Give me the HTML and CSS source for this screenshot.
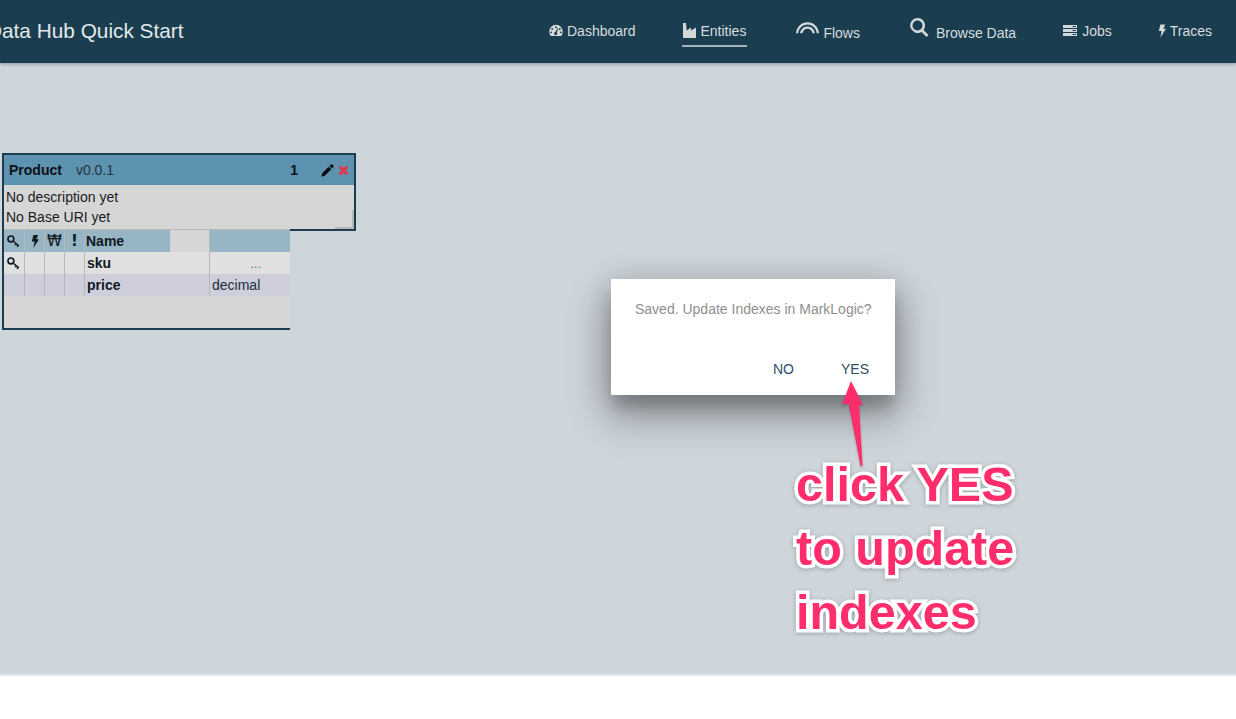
FILE: index.html
```html
<!DOCTYPE html>
<html lang="en">
<head>
<meta charset="utf-8">
<title>Data Hub Quick Start</title>
<link rel="stylesheet" href="styles.css">
</head>
<body>
<svg class="defs" width="0" height="0" aria-hidden="true">
  <symbol id="key" viewBox="0 0 12 12">
    <circle cx="3.600" cy="3.600" r="2.700" fill="none" stroke="#0f1a22" stroke-width="1.500"/>
    <path d="M5.800 5.800 11 10M8.300 8 7.600 9.500M10 9.400 9.300 11" fill="none" stroke="#0f1a22" stroke-width="1.300"/>
  </symbol>
  <symbol id="bolt" viewBox="0 0 10 16">
    <path d="M3 0h6L6.600 5.200H10L3 16l1.500-8H1Z"/>
  </symbol>
</svg>
<header class="topbar">
  <div class="brand">Data Hub Quick Start</div>
  <nav class="nav">
    <a class="nav-item">
      <svg class="ico ico-dash" viewBox="0 0 16 14"><path fill-rule="evenodd" d="M8 0.5a7.7 7.7 0 0 1 7.7 7.7c0 1.9-.6 3.7-1.7 5H2C.9 11.900.3 10.100.3 8.200A7.700 7.700 0 0 1 8 .5Zm0 1.600a1.100 1.100 0 1 0 0 2.200 1.100 1.100 0 0 0 0-2.200ZM3.600 4.100a1.100 1.100 0 1 0 0 2.200 1.100 1.100 0 0 0 0-2.200Zm8.800 0a1.100 1.100 0 1 0 0 2.200 1.100 1.100 0 0 0 0-2.200ZM2.500 8a1.100 1.100 0 1 0 0 2.200A1.100 1.100 0 0 0 2.500 8Zm11 0a1.100 1.100 0 1 0 0 2.200 1.100 1.100 0 0 0 0-2.200ZM9.900 4.500 7.200 8.800a1.800 1.800 0 1 0 1.700.4l1.900-4.400Z"/></svg>
      <span>Dashboard</span>
    </a>
    <a class="nav-item is-active">
      <svg class="ico ico-ent" viewBox="0 0 15 15"><path d="M0 0h3l.7 7.500L8 4.500v3l5-3V15H0Z"/></svg>
      <span>Entities</span>
    </a>
    <a class="nav-item is-low">
      <svg class="ico ico-flow" viewBox="0 0 24 13"><path d="M12 0C5.500 0 .5 5 0 11.500h2.300C2.900 6.300 7 2.300 12 2.300s9.100 4 9.700 9.200H24C23.500 5 18.500 0 12 0Z"/><path d="M12 4.500c-4 0-7.200 3-7.700 7h2.400c.5-2.700 2.700-4.700 5.300-4.700s4.800 2 5.300 4.700h2.400c-.5-4-3.700-7-7.700-7Z"/></svg>
      <span>Flows</span>
    </a>
    <a class="nav-item is-low">
      <svg class="ico ico-search" viewBox="0 0 19 19"><path fill-rule="evenodd" d="M7.500 0a7.500 7.500 0 0 1 6 12l5 5-1.900 1.900-5-5A7.500 7.500 0 1 1 7.500 0Zm0 2.500a5 5 0 1 0 0 10 5 5 0 0 0 0-10Z"/></svg>
      <span class="search-label">Browse Data</span>
    </a>
    <a class="nav-item nav-jobs">
      <svg class="ico ico-jobs" viewBox="0 0 14 11"><path fill-rule="evenodd" d="M0 0h14v3H0Zm9.500 1v1H13V1ZM0 4h14v3H0Zm9.500 1v1H13V5ZM0 8h14v3H0Zm9.500 1v1H13V9Z"/></svg>
      <span>Jobs</span>
    </a>
    <a class="nav-item">
      <svg class="ico ico-bolt"><use href="#bolt"/></svg>
      <span>Traces</span>
    </a>
  </nav>
</header>

<main class="canvas">
  <section class="entity">
    <div class="entity-card">
      <div class="entity-head">
        <strong class="entity-name">Product</strong>
        <span class="entity-version">v0.0.1</span>
        <span class="entity-count">1</span>
        <svg class="act act-edit" viewBox="0 0 14 14"><path d="M10.400.8a1.500 1.500 0 0 1 2.100 0l.7.7a1.500 1.500 0 0 1 0 2.100l-1.300 1.300-2.800-2.800ZM8.300 2.900l2.800 2.800-7 7L.4 13.600l.9-3.700Z"/></svg>
        <svg class="act act-del" viewBox="0 0 12 12"><path d="M3 .6 6 3.600 9 .6 11.400 3 8.400 6l3 3L9 11.400l-3-3-3 3L.6 9l3-3-3-3Z"/></svg>
      </div>
      <div class="entity-desc">
        <div>No description yet</div>
        <div>No Base URI yet</div>
      </div>
      <span class="grip"></span>
    </div>
    <div class="props">
      <div class="row row-head">
        <div class="cell"><svg class="k"><use href="#key"/></svg></div>
        <div class="cell"><svg class="b"><use href="#bolt"/></svg></div>
        <div class="cell won">₩</div>
        <div class="cell bang">!</div>
        <div class="cell name name-head">Name</div>
        <div class="spacer"></div>
        <div class="cell type"></div>
      </div>
      <div class="row row-a">
        <div class="cell"><svg class="k"><use href="#key"/></svg></div>
        <div class="cell"></div>
        <div class="cell"></div>
        <div class="cell"></div>
        <div class="cell name wide">sku</div>
        <div class="cell type dots">...</div>
      </div>
      <div class="row row-b">
        <div class="cell"></div>
        <div class="cell"></div>
        <div class="cell"></div>
        <div class="cell"></div>
        <div class="cell name wide">price</div>
        <div class="cell type">decimal</div>
      </div>
    </div>
  </section>

  <div class="dialog">
    <p class="dialog-text">Saved. Update Indexes in MarkLogic?</p>
    <div class="dialog-actions">
      <span class="dialog-btn">NO</span>
      <span class="dialog-btn">YES</span>
    </div>
  </div>

  <svg class="arrow" viewBox="0 0 30 90" width="30" height="90">
    <path d="M12 0 24 24 20 23.500 23.500 85 21.500 85 9.500 22 3 24Z"/>
  </svg>
  <div class="note">click YES<br>to update<br>indexes</div>
</main>
<footer class="foot"></footer>
</body>
</html>
```
FILE: styles.css
```css
* { box-sizing: border-box; }
html, body { margin: 0; height: 100%; }
body {
  width: 1236px;
  height: 719px;
  overflow: hidden;
  display: flex;
  flex-direction: column;
  font-family: "Liberation Sans", Arial, sans-serif;
  background: #fff;
}
.defs { position: absolute; }

.topbar {
  height: 63px;
  flex: none;
  display: flex;
  align-items: center;
  justify-content: space-between;
  background: #1a3e50;
  box-shadow: 0 1px 3px rgba(0, 0, 0, .3);
  position: relative;
  z-index: 2;
  color: #d8dcdf;
  overflow: hidden;
}
.brand {
  margin-left: -13px;
  padding-bottom: 2px;
  font-size: 20.800px;
  color: #e4e8ea;
  white-space: nowrap;
}
.nav {
  display: flex;
  align-items: flex-start;
  gap: 47px;
  padding-right: 24px;
  height: 63px;
  padding-top: 16px;
}
.nav-item {
  display: flex;
  align-items: center;
  gap: 4px;
  height: 31px;
  font-size: 14px;
  line-height: 16px;
  border-bottom: 2px solid transparent;
}
.nav-item:first-child { margin-right: -1px; }
.nav-item.is-active { border-bottom-color: #a3b1ba; padding: 0 1px; gap: 3px; margin-right: 2px; }
.nav-item.is-low span { position: relative; top: 2px; }
.nav-item.is-low + .nav-item.is-low { margin-left: 3px; }
.nav-jobs { margin-right: -1px; }
.ico { fill: #d3d8db; flex: none; display: block; }
.ico-dash { width: 14px; height: 13px; }
.ico-ent { width: 15px; height: 15px; margin-top: -1px; }
.ico-flow { width: 23px; height: 13px; margin-top: -5px; }
.ico-search { width: 19px; height: 19px; margin-top: -6px; }
.search-label { margin-left: 3px; }
.ico-jobs { width: 14px; height: 11px; margin-right: 1px; }
.ico-bolt { width: 8px; height: 14px; }

.canvas {
  height: 613px;
  flex: none;
  position: relative;
  background: #ced5db;
  border-bottom: 2px solid #e3e6e9;
}
.foot { flex: 1; background: #fff; }

.entity {
  position: absolute;
  left: 2px;
  top: 90px;
  width: 354px;
  font-size: 14px;
  color: #1a1a1a;
}
.entity-card {
  position: relative;
  height: 78px;
  border: 2px solid #1a3e50;
  background: #d6d6d6;
}
.entity-head {
  height: 30px;
  display: flex;
  align-items: center;
  padding-left: 5px;
  background: #5d93b0;
}
.entity-name { color: #0d1114; }
.entity-version { margin-left: 14px; color: #26343c; }
.entity-count { margin-left: auto; font-weight: bold; color: #0d1114; }
.act { display: block; flex: none; }
.act-edit { width: 13px; height: 13px; margin-left: 23px; fill: #0c0c0c; }
.act-del { width: 11px; height: 11px; margin: 0 5px 0 4px; fill: #e0384b; }
.entity-desc { padding: 2px 0 0 2px; line-height: 20px; }
.grip {
  position: absolute;
  right: 0;
  bottom: 0;
  width: 19px;
  height: 19px;
  border-right: 2px solid #b6b6b6;
  border-bottom: 2px solid #b6b6b6;
  clip-path: polygon(100% 0, 100% 100%, 0 100%, 0 85%, 85% 85%, 85% 0);
}
.props {
  width: 288px;
  height: 101px;
  margin-top: -2px;
  position: relative;
  border-left: 2px solid #1a3e50;
  border-bottom: 2px solid #1a3e50;
  background: #d6d6d6;
}
.row {
  display: grid;
  grid-template-columns: 21px 20px 20px 20px 125px 80px;
  height: 22px;
}
.row-head {
  height: 23px;
  grid-template-columns: 21px 20px 20px 20px 85px 40px 80px;
  border-top: 1px solid #b9b9b9;
}
.row-a { background: #e0e0e0; }
.row-b { background: #cfcfdc; }
.cell {
  border-right: 1px solid #b7b7b7;
  display: flex;
  align-items: center;
  justify-content: center;
  color: #0f1a22;
  font-weight: bold;
  min-width: 0;
}
.row-head .cell { background: #98b5c6; }
.row-head .cell.name { border-right: 0; justify-content: flex-start; padding-left: 1px; }
.row-head .type { border-right: 0; }
.spacer { background: #d6d6d6; border-right: 1px solid #b7b7b7; }
.k { width: 13px; height: 13px; margin-right: 1px; }
.b { width: 8px; height: 13px; fill: #0f1a22; }
.won { font-family: "DejaVu Sans", sans-serif; font-size: 15px; font-weight: normal; }
.bang { font-family: "DejaVu Sans", sans-serif; font-size: 15px; }
.cell.wide { justify-content: flex-start; padding-left: 2px; }
.cell.type {
  justify-content: flex-start;
  border-right: 0;
  padding-left: 2px;
  font-weight: normal;
  color: #1a2e3a;
}
.cell.dots { justify-content: flex-end; padding: 0 29px 0 0; color: #2f7f9f; font-size: 13px; }

.dialog {
  position: absolute;
  left: 611px;
  top: 216px;
  width: 284px;
  height: 116px;
  background: #fff;
  box-shadow: 0 15px 12px -2px rgba(0, 0, 0, .14), 0 19px 38px 4px rgba(0, 0, 0, .3), 0 5px 30px rgba(0, 0, 0, .14);
  font-size: 14px;
  display: flex;
  flex-direction: column;
  justify-content: space-between;
}
.dialog-text {
  margin: 0;
  padding: 22px 24px 0;
  color: #8f8f8f;
  line-height: 17px;
  white-space: nowrap;
}
.dialog-actions {
  display: flex;
  justify-content: flex-end;
  gap: 47px;
  padding: 0 26px 18px 0;
  line-height: 16px;
  color: #2d5169;
}

.arrow {
  position: absolute;
  left: 839px;
  top: 318px;
  fill: #ff2d6c;
  filter: drop-shadow(0 1px 1px rgba(0, 0, 0, .25));
}
.note {
  position: absolute;
  left: 796px;
  top: 389px;
  font-size: 48.500px;
  font-weight: bold;
  line-height: 64.200px;
  color: #ff2d6c;
  white-space: nowrap;
  -webkit-text-stroke: 7px #fff;
  paint-order: stroke fill;
  filter: drop-shadow(0 1px 2px rgba(0, 0, 0, .25));
}
```
